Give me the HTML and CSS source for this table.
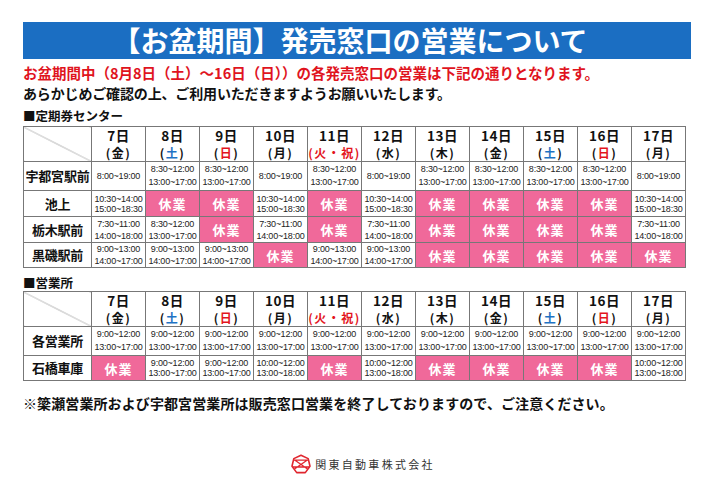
FILE: index.html
```html
<!DOCTYPE html>
<html lang="ja">
<head>
<meta charset="utf-8">
<title>お盆期間 発売窓口の営業について</title>
<link rel="stylesheet" href="styles.css">
</head>
<body>
<div class="page">
  <h1 class="title-bar">【お盆期間】発売窓口の営業について</h1>
  <p class="lead red">お盆期間中（8月8日（土）～16日（日））の各発売窓口の営業は下記の通りとなります。</p>
  <p class="lead">あらかじめご確認の上、ご利用いただきますようお願いいたします。</p>

  <h2 class="section">■定期券センター</h2>
  <table class="sched">
    <colgroup><col class="c-label"><col span="11" class="c-day"></colgroup>
    <tr class="r-head">
      <th class="diag"></th>
      <th><span class="d">7日</span><span class="w">(金)</span></th>
      <th><span class="d">8日</span><span class="w">(<b class="sat">土</b>)</span></th>
      <th><span class="d">9日</span><span class="w">(<b class="sun">日</b>)</span></th>
      <th><span class="d">10日</span><span class="w">(月)</span></th>
      <th><span class="d">11日</span><span class="w sun">(火・祝)</span></th>
      <th><span class="d">12日</span><span class="w">(水)</span></th>
      <th><span class="d">13日</span><span class="w">(木)</span></th>
      <th><span class="d">14日</span><span class="w">(金)</span></th>
      <th><span class="d">15日</span><span class="w">(<b class="sat">土</b>)</span></th>
      <th><span class="d">16日</span><span class="w">(<b class="sun">日</b>)</span></th>
      <th><span class="d">17日</span><span class="w">(月)</span></th>
    </tr>
    <tr class="r29">
      <th class="lbl">宇都宮駅前</th>
      <td class="t">8:00~19:00</td>
      <td class="t sp">8:30~12:00<br>13:00~17:00</td>
      <td class="t sp">8:30~12:00<br>13:00~17:00</td>
      <td class="t">8:00~19:00</td>
      <td class="t sp">8:30~12:00<br>13:00~17:00</td>
      <td class="t">8:00~19:00</td>
      <td class="t sp">8:30~12:00<br>13:00~17:00</td>
      <td class="t sp">8:30~12:00<br>13:00~17:00</td>
      <td class="t sp">8:30~12:00<br>13:00~17:00</td>
      <td class="t sp">8:30~12:00<br>13:00~17:00</td>
      <td class="t">8:00~19:00</td>
    </tr>
    <tr class="r26">
      <th class="lbl">池上</th>
      <td class="t">10:30~14:00<br>15:00~18:30</td>
      <td class="off">休業</td>
      <td class="off">休業</td>
      <td class="t">10:30~14:00<br>15:00~18:30</td>
      <td class="off">休業</td>
      <td class="t">10:30~14:00<br>15:00~18:30</td>
      <td class="off">休業</td>
      <td class="off">休業</td>
      <td class="off">休業</td>
      <td class="off">休業</td>
      <td class="t">10:30~14:00<br>15:00~18:30</td>
    </tr>
    <tr class="r26">
      <th class="lbl">栃木駅前</th>
      <td class="t sp">7:30~11:00<br>14:00~18:00</td>
      <td class="t sp">8:30~12:00<br>13:00~17:00</td>
      <td class="off">休業</td>
      <td class="t sp">7:30~11:00<br>14:00~18:00</td>
      <td class="off">休業</td>
      <td class="t sp">7:30~11:00<br>14:00~18:00</td>
      <td class="off">休業</td>
      <td class="off">休業</td>
      <td class="off">休業</td>
      <td class="off">休業</td>
      <td class="t sp">7:30~11:00<br>14:00~18:00</td>
    </tr>
    <tr class="r25">
      <th class="lbl">黒磯駅前</th>
      <td class="t sp">9:00~13:00<br>14:00~17:00</td>
      <td class="t sp">9:00~13:00<br>14:00~17:00</td>
      <td class="t sp">9:00~13:00<br>14:00~17:00</td>
      <td class="off">休業</td>
      <td class="t sp">9:00~13:00<br>14:00~17:00</td>
      <td class="t sp">9:00~13:00<br>14:00~17:00</td>
      <td class="off">休業</td>
      <td class="off">休業</td>
      <td class="off">休業</td>
      <td class="off">休業</td>
      <td class="off">休業</td>
    </tr>
  </table>

  <h2 class="section s2">■営業所</h2>
  <table class="sched">
    <colgroup><col class="c-label"><col span="11" class="c-day"></colgroup>
    <tr class="r-head2">
      <th class="diag"></th>
      <th><span class="d">7日</span><span class="w">(金)</span></th>
      <th><span class="d">8日</span><span class="w">(<b class="sat">土</b>)</span></th>
      <th><span class="d">9日</span><span class="w">(<b class="sun">日</b>)</span></th>
      <th><span class="d">10日</span><span class="w">(月)</span></th>
      <th><span class="d">11日</span><span class="w sun">(火・祝)</span></th>
      <th><span class="d">12日</span><span class="w">(水)</span></th>
      <th><span class="d">13日</span><span class="w">(木)</span></th>
      <th><span class="d">14日</span><span class="w">(金)</span></th>
      <th><span class="d">15日</span><span class="w">(<b class="sat">土</b>)</span></th>
      <th><span class="d">16日</span><span class="w">(<b class="sun">日</b>)</span></th>
      <th><span class="d">17日</span><span class="w">(月)</span></th>
    </tr>
    <tr class="r29">
      <th class="lbl">各営業所</th>
      <td class="t sp">9:00~12:00<br>13:00~17:00</td>
      <td class="t sp">9:00~12:00<br>13:00~17:00</td>
      <td class="t sp">9:00~12:00<br>13:00~17:00</td>
      <td class="t sp">9:00~12:00<br>13:00~17:00</td>
      <td class="t sp">9:00~12:00<br>13:00~17:00</td>
      <td class="t sp">9:00~12:00<br>13:00~17:00</td>
      <td class="t sp">9:00~12:00<br>13:00~17:00</td>
      <td class="t sp">9:00~12:00<br>13:00~17:00</td>
      <td class="t sp">9:00~12:00<br>13:00~17:00</td>
      <td class="t sp">9:00~12:00<br>13:00~17:00</td>
      <td class="t sp">9:00~12:00<br>13:00~17:00</td>
    </tr>
    <tr class="r25">
      <th class="lbl">石橋車庫</th>
      <td class="off">休業</td>
      <td class="t">9:00~12:00<br>13:00~17:00</td>
      <td class="t">9:00~12:00<br>13:00~17:00</td>
      <td class="t">10:00~12:00<br>13:00~18:00</td>
      <td class="off">休業</td>
      <td class="t">10:00~12:00<br>13:00~18:00</td>
      <td class="off">休業</td>
      <td class="off">休業</td>
      <td class="off">休業</td>
      <td class="off">休業</td>
      <td class="t">10:00~12:00<br>13:00~18:00</td>
    </tr>
  </table>

  <p class="note">※簗瀬営業所および宇都宮営業所は販売窓口営業を終了しておりますので、ご注意ください。</p>

  <div class="brand">
    <svg class="brand-mark" viewBox="0 0 20 20" width="20" height="20" aria-hidden="true">
      <path d="M10 1.2 L17.2 4.6 L19 12.2 L14.3 18.6 L5.7 18.6 L1 12.2 L2.8 4.6 Z" fill="none" stroke="#e0262f" stroke-width="1.6" stroke-linejoin="round"/>
      <path d="M3 6.2 L17 6.2 M4 6.2 L16.5 15 M16 6.2 L3.5 15 M2 13 L18 13" fill="none" stroke="#e0262f" stroke-width="1.3"/>
    </svg>
    <span class="brand-name">関東自動車株式会社</span>
  </div>
</div>
</body>
</html>
```

FILE: styles.css
```css
html, body {
  margin: 0;
  padding: 0;
  background: #ffffff;
}

body {
  font-family: "Noto Sans CJK JP", "Noto Sans", sans-serif;
  color: #111;
}

.page {
  width: 668px;
  padding: 22px 0 0 23px;
}

.title-bar {
  margin: 0;
  height: 37px;
  padding-right: 14px;
  background: #1b6ec2;
  color: #fff;
  font-size: 28px;
  font-weight: 700;
  line-height: 37px;
  text-align: center;
  letter-spacing: 0;
}

.lead {
  margin: 0;
  font-size: 14px;
  font-weight: 700;
  line-height: 20px;
  letter-spacing: -0.15px;
}

.lead.red {
  margin-top: 4px;
  font-size: 14.5px;
  letter-spacing: 0;
  color: #e0141e;
}

.section {
  margin: 5px 0 2px;
  font-size: 12.5px;
  font-weight: 700;
  line-height: 16px;
}

.section.s2 {
  margin-top: 7px;
  margin-bottom: 0;
}

.sched {
  width: 663px;
  table-layout: fixed;
  border-collapse: collapse;
  border: 1px solid #777;
}

.c-label { width: 68px; }
.c-day { width: 54px; }

.sched th,
.sched td {
  border: 1px solid #777;
  padding: 0;
  text-align: center;
  vertical-align: middle;
  overflow: hidden;
}

.r-head { height: 34px; }
.r-head2 { height: 34px; }
.r29 { height: 29px; }
.r26 { height: 26px; }
.r25 { height: 25px; }

.r-head th,
.r-head2 th {
  font-weight: 700;
}

.d {
  display: block;
  font-size: 13.5px;
  line-height: 17px;
  letter-spacing: 0.5px;
}

.w {
  display: block;
  font-size: 12px;
  line-height: 17px;
  letter-spacing: 1.5px;
  white-space: nowrap;
}

.sat { color: #1e73c4; font-weight: 700; }
.sun { color: #e3151d; font-weight: 700; }

.diag {
  background: linear-gradient(to top right, transparent calc(50% - 0.6px), #999 50%, transparent calc(50% + 0.6px));
}

.lbl {
  font-size: 13px;
  font-weight: 700;
  line-height: 16px;
  letter-spacing: -0.2px;
}

.t {
  font-family: "Liberation Sans", Arial, sans-serif;
  font-size: 9px;
  line-height: 10px;
  letter-spacing: -0.2px;
  color: #222;
  white-space: nowrap;
}

.t.sp {
  line-height: 12px;
}

.r29 .t.sp {
  line-height: 13.5px;
}

.off {
  background: #f0699a;
  color: #fff;
  font-size: 13px;
  font-weight: 700;
  letter-spacing: 1px;
}

.note {
  margin: 11px 0 0;
  font-size: 14px;
  font-weight: 700;
  line-height: 22px;
  letter-spacing: 0.1px;
}

.brand {
  margin: 40px 0 0 12px;
  display: flex;
  justify-content: center;
  align-items: center;
  gap: 4px;
}

.brand-mark {
  display: block;
}

.brand-name {
  font-size: 11px;
  color: #333;
  letter-spacing: 2.3px;
  line-height: 20px;
}
```
